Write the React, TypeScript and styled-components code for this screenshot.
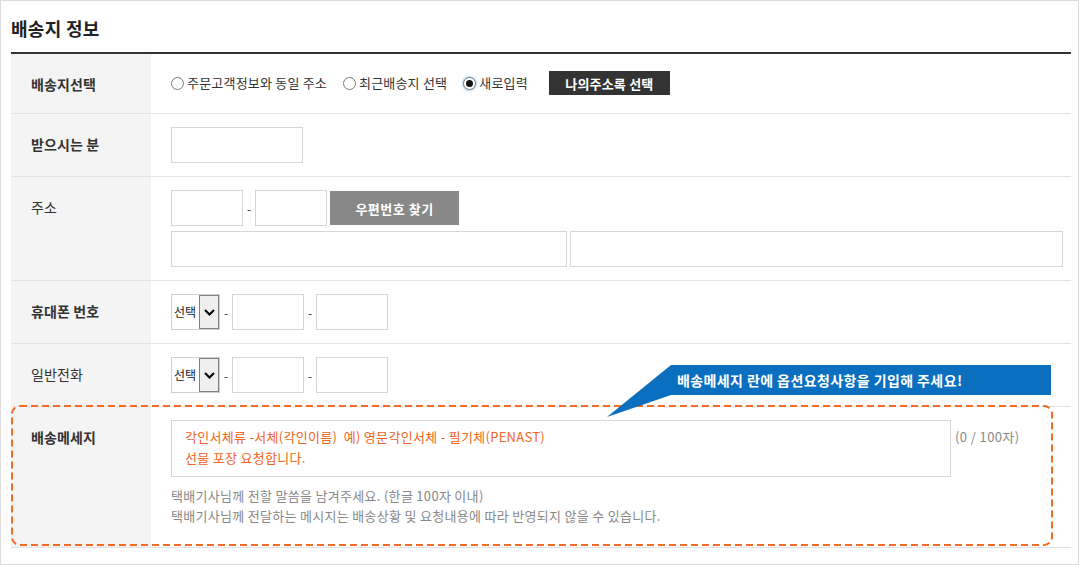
import React from "react";
import styled, { createGlobalStyle } from "styled-components";

const GlobalStyle = createGlobalStyle`
  html, body { margin: 0; padding: 0; background: #fff; }
  body { font-family: "Noto Sans CJK KR", "Noto Sans", sans-serif; color: #333; }
  * { box-sizing: border-box; }
`;

const Frame = styled.div`
  width: 1079px;
  height: 565px;
  border: 1px solid #dcdcdc;
  padding: 0 7px 0 10px;
`;

const Title = styled.h2`
  margin: 0 0 11px;
  padding-top: 14px;
  font-size: 18px;
  line-height: 26px;
  font-weight: 700;
  letter-spacing: 0.3px;
  color: #222;
`;

const Table = styled.div`
  border-top: 2px solid #333;
  display: flex;
  flex-direction: column;
`;

const Row = styled.div`
  position: relative;
  display: grid;
  grid-template-columns: 140px 1fr;
  border-bottom: 1px solid #e2e2e2;
`;

const Label = styled.div<{ $bold?: boolean }>`
  background: #f4f4f4;
  padding: 19px 20px 0;
  font-size: 14px;
  line-height: 22px;
  font-weight: ${(p) => (p.$bold ? 700 : 400)};
  letter-spacing: 0.1px;
  color: #333;
`;

const Cell = styled.div<{ $top?: number; $bottom?: number }>`
  padding: ${(p) => p.$top ?? 13}px 8px ${(p) => p.$bottom ?? 13}px 20px;
  display: flex;
  flex-direction: column;
  gap: 5px;
`;

const Line = styled.div`
  display: flex;
  align-items: center;
`;

const TopLine = styled.div`
  display: flex;
  align-items: flex-start;
`;

const RadioGroup = styled.div`
  display: flex;
  align-items: center;
  gap: 16px;
  height: 24px;
`;

const RadioItem = styled.label`
  display: inline-flex;
  align-items: center;
  gap: 3px;
  font-size: 13px;
  line-height: 16px;
  letter-spacing: 0.2px;
  color: #333;
`;

const RadioCircle = styled.span<{ $checked?: boolean }>`
  width: 13px;
  height: 13px;
  border-radius: 50%;
  border: 1px solid #7a7a7a;
  background: #fff;
  display: inline-flex;
  align-items: center;
  justify-content: center;
  box-shadow: ${(p) => (p.$checked ? "0 0 2px 1px rgba(110,180,235,0.55)" : "none")};
  &::after {
    content: "";
    width: 7px;
    height: 7px;
    border-radius: 50%;
    background: #111;
    display: ${(p) => (p.$checked ? "block" : "none")};
  }
`;

const Button = styled.button<{ $dark?: boolean; $w: number; $h: number }>`
  width: ${(p) => p.$w}px;
  height: ${(p) => p.$h}px;
  border: 0;
  padding: 0;
  background: ${(p) => (p.$dark ? "#333" : "#888")};
  color: #fff;
  font-family: inherit;
  font-size: 13px;
  font-weight: 700;
  letter-spacing: ${(p) => (p.$dark ? "0.2px" : "0.5px")};
  display: flex;
  align-items: center;
  justify-content: center;
`;

const AddressButton = styled(Button)`
  margin-left: 3px;
`;

const BookButton = styled(Button)`
  margin-left: 5px;
`;

const Input = styled.input<{ $w?: number }>`
  width: ${(p) => (p.$w ? `${p.$w}px` : "auto")};
  flex: ${(p) => (p.$w ? "0 0 auto" : "1 1 0")};
  min-width: 0;
  height: 36px;
  border: 1px solid #d6d6d6;
  background: #fff;
  padding: 0 6px;
  outline: none;
  font-family: inherit;
  font-size: 12px;
`;

const WideGap = styled.span`
  width: 3px;
  flex: 0 0 3px;
`;

const Dash = styled.span`
  width: 12px;
  text-align: center;
  font-size: 12px;
  color: #333;
`;

const SelectBox = styled.div`
  width: 49px;
  height: 36px;
  border: 1px solid #cfcfcf;
  background: #fff;
  display: flex;
  align-items: stretch;
`;

const SelectText = styled.span`
  flex: 1;
  padding-left: 2px;
  font-size: 12px;
  letter-spacing: 0;
  line-height: 34px;
  color: #222;
`;

const SelectArrow = styled.span`
  width: 20px;
  background: #efefef;
  border: 1px solid #808080;
  display: flex;
  align-items: center;
  justify-content: center;
`;

const MessageBox = styled.div`
  width: 780px;
  height: 57px;
  border: 1px solid #d6d6d6;
  padding: 5px 10px 0 13px;
  font-size: 13px;
  line-height: 21px;
  letter-spacing: 0.3px;
  color: #f26522;
  white-space: pre;
`;

const Counter = styled.span`
  margin-left: 4px;
  padding-top: 7px;
  font-size: 13px;
  line-height: 20px;
  letter-spacing: 0.4px;
  color: #888;
`;

const Help = styled.p`
  margin: 4px 0 0;
  font-size: 13px;
  line-height: 20px;
  letter-spacing: 0.3px;
  color: #888;
`;

const Highlight = styled.svg`
  position: absolute;
  left: 0;
  top: -2px;
  pointer-events: none;
  overflow: visible;
`;

const Tooltip = styled.div`
  position: absolute;
  left: 660px;
  top: -42px;
  width: 380px;
  height: 30px;
  background: #0b6fbf;
  color: #fff;
  font-size: 14px;
  font-weight: 700;
  line-height: 30px;
  letter-spacing: 0.4px;
  padding-left: 6px;
  white-space: nowrap;
`;

const TooltipTail = styled.svg`
  position: absolute;
  left: -64px;
  top: 0;
`;

const Chevron = () => (
  <svg width="11" height="7" viewBox="0 0 11 7">
    <polyline points="1,1 5.5,5.5 10,1" fill="none" stroke="#000" strokeWidth="2" />
  </svg>
);

const PhoneSelect = () => (
  <SelectBox>
    <SelectText>선택</SelectText>
    <SelectArrow>
      <Chevron />
    </SelectArrow>
  </SelectBox>
);

const PhoneLine = () => (
  <Line>
    <PhoneSelect />
    <Dash>-</Dash>
    <Input $w={72} />
    <Dash>-</Dash>
    <Input $w={72} />
  </Line>
);

export default function App() {
  return (
    <>
      <GlobalStyle />
      <Frame>
        <Title>배송지 정보</Title>
        <Table>
          <Row>
            <Label $bold>배송지선택</Label>
            <Cell $top={17} $bottom={18}>
              <RadioGroup>
                <RadioItem>
                  <RadioCircle />
                  주문고객정보와 동일 주소
                </RadioItem>
                <RadioItem>
                  <RadioCircle />
                  최근배송지 선택
                </RadioItem>
                <RadioItem>
                  <RadioCircle $checked />
                  새로입력
                </RadioItem>
                <BookButton $dark $w={121} $h={24}>
                  나의주소록 선택
                </BookButton>
              </RadioGroup>
            </Cell>
          </Row>
          <Row>
            <Label $bold>받으시는 분</Label>
            <Cell>
              <Line>
                <Input $w={132} />
              </Line>
            </Cell>
          </Row>
          <Row>
            <Label>주소</Label>
            <Cell>
              <Line>
                <Input $w={72} />
                <Dash>-</Dash>
                <Input $w={72} />
                <AddressButton $w={129} $h={34}>
                  우편번호 찾기
                </AddressButton>
              </Line>
              <Line>
                <Input $w={396} />
                <WideGap />
                <Input />
              </Line>
            </Cell>
          </Row>
          <Row>
            <Label $bold>휴대폰 번호</Label>
            <Cell>
              <PhoneLine />
            </Cell>
          </Row>
          <Row>
            <Label>일반전화</Label>
            <Cell>
              <PhoneLine />
            </Cell>
          </Row>
          <Row>
            <Label $bold>배송메세지</Label>
            <Cell $bottom={21}>
              <TopLine>
                <MessageBox>
                  {"각인서체류 -서체(각인이름)  예) 영문각인서체 - 필기체(PENAST)\n선물 포장 요청합니다."}
                </MessageBox>
                <Counter>(0 / 100자)</Counter>
              </TopLine>
              <Help>
                택배기사님께 전할 말씀을 남겨주세요. (한글 100자 이내)
                <br />
                택배기사님께 전달하는 메시지는 배송상황 및 요청내용에 따라 반영되지 않을 수 있습니다.
              </Help>
            </Cell>
            <Highlight width="1042" height="141">
              <rect
                x="1"
                y="1"
                width="1040"
                height="139"
                rx="8"
                ry="8"
                fill="none"
                stroke="#f36c21"
                strokeWidth="2"
                strokeDasharray="7 4"
              />
            </Highlight>
            <Tooltip>
              <TooltipTail width="64" height="52" viewBox="0 0 64 52">
                <polygon points="64,0 0,52 64,30" fill="#0b6fbf" />
              </TooltipTail>
              배송메세지 란에 옵션요청사항을 기입해 주세요!
            </Tooltip>
          </Row>
        </Table>
      </Frame>
    </>
  );
}
